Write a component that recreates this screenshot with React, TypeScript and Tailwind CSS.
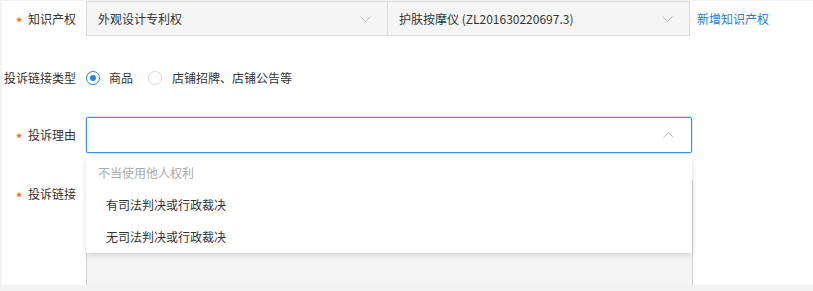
import React from "react";

const font = { fontFamily: '"Noto Sans CJK SC", "Microsoft YaHei", sans-serif' };

function ChevronDown() {
  return (
    <svg width="11" height="6" viewBox="0 0 11 6" fill="none">
      <path d="M0.5 0.5 L5.5 5.5 L10.5 0.5" stroke="#c0c0c0" strokeWidth="1" />
    </svg>
  );
}
function ChevronUp() {
  return (
    <svg width="11" height="6" viewBox="0 0 11 6" fill="none">
      <path d="M0.5 5.5 L5.5 0.5 L10.5 5.5" stroke="#c0c0c0" strokeWidth="1" />
    </svg>
  );
}

function Label({ text, required }: { text: string; required?: boolean }) {
  return (
    <div className="w-[84px] shrink-0 pr-[10px] flex items-center justify-end text-[12px] text-[#333] leading-[20px]">
      {required && <span className="relative top-[3px] text-[#ff6a00] mr-[6px] text-[12px] font-bold">*</span>}
      <span>{text}</span>
    </div>
  );
}

export default function App() {
  return (
    <div className="w-[813px] h-[291px] bg-[#f3f3f3] overflow-hidden" style={font}>
      <div className="ml-[2px] mt-[1px] h-[284px] bg-white relative overflow-hidden">
        {/* Row 1 */}
        <div className="flex items-center h-[35px]">
          <Label text="知识产权" required />
          <div className="flex">
            <div className="w-[302px] h-[35px] border border-[#dcdcdc] bg-[#f5f5f5] flex items-center justify-between pl-[11px] pr-[16px] text-[12px] text-[#333]">
              <span>外观设计专利权</span>
              <ChevronDown />
            </div>
            <div className="w-[303px] h-[35px] -ml-px border border-[#dcdcdc] bg-[#f5f5f5] flex items-center justify-between pl-[11px] pr-[16px] text-[12px] text-[#333]">
              <span>护肤按摩仪 (ZL201630220697.3)</span>
              <ChevronDown />
            </div>
          </div>
          <a className="ml-[7px] text-[12px] text-[#2a7ad0]">新增知识产权</a>
        </div>

        {/* Row 2 */}
        <div className="flex items-center mt-[32px] h-[20px]">
          <Label text="投诉链接类型" />
          <div className="flex items-center text-[12px] text-[#333]">
            <span className="w-[14px] h-[14px] rounded-full border border-[#2a82d8] flex items-center justify-center">
              <span className="w-[6px] h-[6px] rounded-full bg-[#2a82d8]" />
            </span>
            <span className="ml-[9px]">商品</span>
            <span className="ml-[15px] w-[14px] h-[14px] rounded-full border border-[#d9d9d9]" />
            <span className="ml-[10px]">店铺招牌、店铺公告等</span>
          </div>
        </div>

        {/* Row 3 */}
        <div className="flex items-center mt-[29px]">
          <Label text="投诉理由" required />
          <div className="relative">
            <div className="w-[606px] h-[36px] border border-[#3b93e4] rounded-[2px] shadow-[0_0_0_1px_#d5e8fa] bg-white flex items-center justify-end pr-[17px]">
              <ChevronUp />
            </div>
            <div className="absolute left-0 top-[40px] w-[606px] bg-white shadow-[0_2px_6px_rgba(0,0,0,0.15)] z-10 text-[12px]">
              <div className="h-[32px] flex items-center pl-[12px] text-[#aaa]">不当使用他人权利</div>
              <div className="h-[32px] flex items-center pl-[20px] text-[#333]">有司法判决或行政裁决</div>
              <div className="h-[32px] flex items-center pl-[20px] text-[#333]">无司法判决或行政裁决</div>
            </div>
          </div>
        </div>

        {/* Row 4 */}
        <div className="flex items-start mt-[27px]">
          <div className="pt-[4px]">
            <Label text="投诉链接" required />
          </div>
          <div className="w-[607px] h-[120px] border border-[#d0d0d0] bg-[#f5f5f5]" />
        </div>
      </div>
    </div>
  );
}
